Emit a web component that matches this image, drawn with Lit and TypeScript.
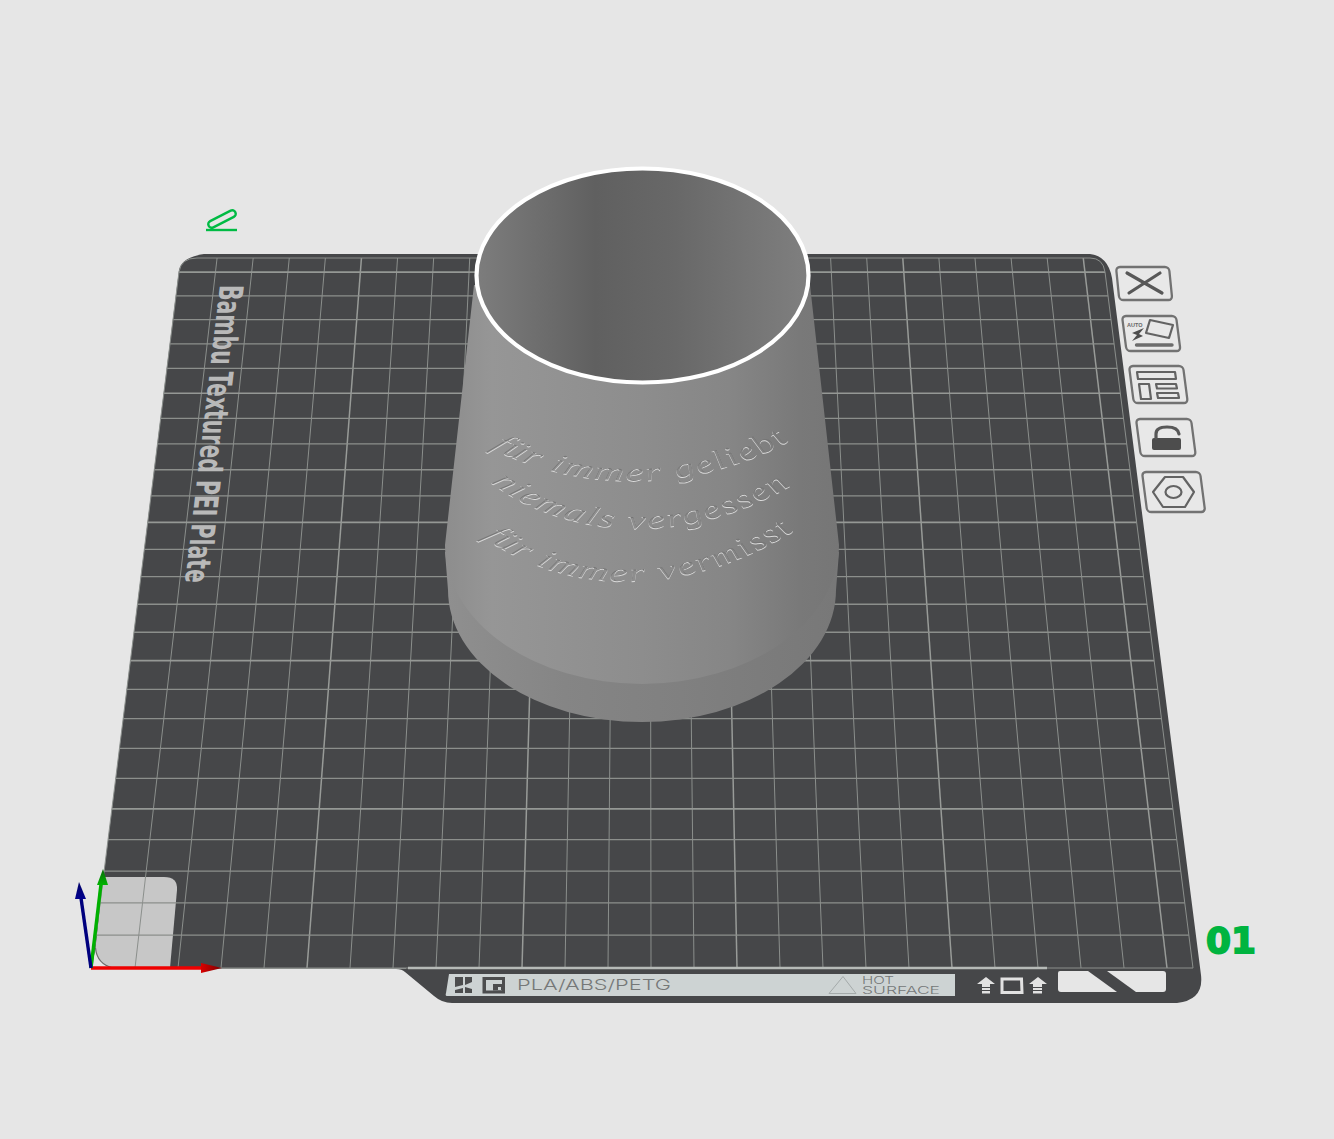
import { LitElement, html, svg, css } from 'lit';
import { customElement } from 'lit/decorators.js';

// bed perspective, fitted from the grid: v in mm from the front edge
const yAt = (v: number) => 968 - (3.303 * v) / (1 + 0.000747 * v);
const leftAt = (y: number) => 92 + ((968 - y) / 710) * 89;
const rightAt = (y: number) => 1193 - ((968 - y) / 710) * 88;

const BED = 'M92,968 L179,272 Q181,258 197,258 L1090,258 Q1103,258 1105,272 L1193,968 Z';
const PLATE =
  'M92,969 L179,270 Q182,257 204,254 L1090,254 Q1108,256 1112,278 L1201,975 Q1204,1000 1177,1003 L452,1003 Q442,1003 434,996 L405,972 Q402,969 396,969 Z';

const STRETCH = 1.55;
const scaled = (p: string) =>
  p.replace(/(\d+(?:\.\d+)?),(\d+(?:\.\d+)?)/g, (_, x, y) => `${(Number(x) / STRETCH).toFixed(2)},${y}`);

const CUP_LINES = [
  { id: 'l1', d: 'M490,448 C570,490 690,500 800,436', text: 'für immer geliebt' },
  { id: 'l2', d: 'M490,483 C560,535 680,555 800,481', text: 'niemals vergessen' },
  { id: 'l3', d: 'M482,537 C560,592 680,607 808,523', text: 'für immer vermisst' },
];

@customElement('app-root')
export class AppRoot extends LitElement {
  static styles = css`
    :host {
      display: block;
      width: 1334px;
      height: 1139px;
      background: #e6e6e6;
      overflow: hidden;
    }
    svg { display: block; }
    .plate { fill: #464749; }
    .tile { fill: #c7c7c7; }
    .tile-edge { fill: none; stroke: #6a6a6a; stroke-width: 1.2; }
    .corner { fill: #e6e6e6; }
    .grid { stroke: #8b8f8c; stroke-width: 1; fill: none; }
    .grid-major { stroke: #989b98; stroke-width: 1.5; fill: none; }
    .h-line { stroke: #8c8f8c; stroke-width: 1.3; fill: none; }
    .h-major { stroke: #959895; stroke-width: 1.7; fill: none; }
    .front-line { stroke: #b6bab7; stroke-width: 2.4; fill: none; }
    .plate-name {
      font-family: 'DejaVu Sans', sans-serif;
      font-weight: 700;
      font-size: 33px;
      fill: #b9b9b9;
    }
    .strip { fill: #cdd3d3; }
    .ink { fill: #4c4d4e; }
    .strip-light { fill: #cdd3d3; }
    .material {
      font-family: 'Inter', sans-serif;
      font-weight: 300;
      font-size: 15px;
      fill: #757878;
    }
    .hot {
      font-family: 'Inter', sans-serif;
      font-weight: 300;
      font-size: 10px;
      fill: #747777;
    }
    .warn { fill: none; stroke: #a4aaaa; stroke-width: 1; }
    .pale { fill: #e2e2e2; }
    .pale-line { fill: none; stroke: #e2e2e2; stroke-width: 3; }
    .tab { fill: #e6e6e6; }
    .rim { fill: url(#inner); stroke: #ffffff; stroke-width: 4.2; }
    .body { fill: url(#body); }
    .flange { fill: url(#flange); }
    .cup-text {
      font-family: 'Liberation Serif', serif;
      font-style: italic;
      font-size: 27px;
      letter-spacing: 1.5px;
      fill: #000;
    }
    .card { fill: #e8e8e8; stroke: #727272; stroke-width: 2.3; }
    .icon-line { fill: none; stroke: #636363; stroke-width: 2.2; stroke-linecap: round; stroke-linejoin: round; }
    .icon-bar { fill: none; stroke: #6c6c6c; stroke-width: 3.4; stroke-linecap: round; }
    .icon-thick { fill: none; stroke: #585858; stroke-width: 3.2; stroke-linecap: round; }
    .icon-fill { fill: #4d4d4d; }
    .auto {
      font-family: 'Liberation Sans', sans-serif;
      font-weight: 700;
      font-size: 5.5px;
      fill: #666;
    }
    .green-line { fill: none; stroke: #00bb44; stroke-width: 2.4; }
    .plate-no {
      font-family: 'DejaVu Sans', sans-serif;
      font-weight: 700;
      font-size: 36px;
      fill: #00b440;
      stroke: #00b440;
      stroke-width: 1.8;
    }
    .ax-r { fill: url(#cone-r); }
    .ax-g { fill: url(#cone-g); }
    .ax-b { fill: url(#cone-b); }
    .stem-r { stroke: #ee0000; stroke-width: 3.6; }
    .stem-g { stroke: #00b000; stroke-width: 3.4; }
    .stem-b { stroke: #00007e; stroke-width: 3.4; }
  `;

  gridLines() {
    const lines = [];
    for (let k = 1; k <= 25; k++) {
      const cls = k % 5 === 0 ? 'grid-major' : 'grid';
      lines.push(svg`<line class=${cls} x1=${92 + 43 * k} y1="968" x2=${181 + 36.09 * k} y2="258"></line>`);
    }
    for (let v = 10; v <= 250; v += 10) {
      const y = yAt(v);
      const cls = v % 50 === 0 ? 'h-major' : 'h-line';
      lines.push(svg`<line class=${cls} x1=${leftAt(y)} y1=${y} x2=${rightAt(y)} y2=${y}></line>`);
    }
    return lines;
  }

  card(x: number, y: number, w: number, h: number, k: number) {
    return svg`<rect class="card" width=${w} height=${h} rx="4" transform="matrix(1 0 ${k} 1 ${x} ${y})"></rect>`;
  }

  sideButtons() {
    return svg`
      ${this.card(1116, 267, 53, 33, 0.1)}
      <path class="icon-thick" d="M1127,273 L1162,293 M1160,273 L1129,293"></path>

      ${this.card(1122, 316, 54, 35, 0.13)}
      <text class="auto" x="1127" y="327">AUTO</text>
      <path class="icon-line" d="M1150,320 L1173,325 L1169,338 L1146,333 Z"></path>
      <path class="icon-fill" d="M1144,328 L1132,333 L1137,335 L1132,341 L1143,336 L1139,334 Z"></path>
      <path class="icon-bar" d="M1136.5,345 L1172,345"></path>

      ${this.card(1129, 366, 54, 37, 0.13)}
      <path class="icon-line" d="M1137,372 H1175 L1176,379 H1138 Z M1139,384 H1149 L1151,399 H1141 Z M1156,384 H1176 L1177,388.5 H1157 Z M1157,393 H1178 L1179,398 H1158 Z"></path>

      ${this.card(1136, 419, 55, 37, 0.13)}
      <rect class="icon-fill" x="1152" y="438" width="29" height="12" rx="2"></rect>
      <path class="icon-thick" d="M1156,438 V434 Q1156,427 1167,427 Q1178,427 1179,434"></path>

      ${this.card(1142, 472, 58, 40, 0.13)}
      <path class="icon-line" d="M1153,492 L1165,477 L1183,477 L1194,492 L1185,507 L1163,507 Z"></path>
      <ellipse class="icon-line" cx="1173.5" cy="492" rx="8" ry="6"></ellipse>
    `;
  }

  bottomStrip() {
    return svg`
      <path class="strip" d="M449,974 L955,974 L955,996 L447,996 Q445,996 446,993 Z"></path>
      <path class="ink" d="M455,977 H463 V985 L455,987 Z M465,977 H472 V982 L465,985 Z M455,990 L463,988 V993 H455 Z M465,987 L472,989 V993 H465 Z"></path>
      <rect class="ink" x="482.5" y="977" width="22.5" height="16.5"></rect>
      <rect class="strip-light" x="486" y="980" width="16" height="10.5"></rect>
      <rect class="ink" x="493" y="984" width="9" height="6.5"></rect>
      <rect class="strip-light" x="498" y="987" width="3" height="3"></rect>
      <text class="material" x="517" y="990" textLength="154" lengthAdjust="spacingAndGlyphs">PLA/ABS/PETG</text>
      <path class="warn" d="M829,993.5 L843,976.5 L856,993.5 Z"></path>
      <text class="hot" x="862" y="984" textLength="32" lengthAdjust="spacingAndGlyphs">HOT</text>
      <text class="hot" x="862" y="993.5" textLength="78" lengthAdjust="spacingAndGlyphs">SURFACE</text>

      <path class="pale" d="M986,977 L995,984 H990 V987 H982 V984 H977 Z M982,988 H990 V990 H982 Z M982,991 H990 V993.5 H982 Z"></path>
      <path class="pale-line" d="M1002,979 H1021.5 L1022,992.5 H1002 Z"></path>
      <path class="pale" d="M1038,977 L1047,984 H1042 V987 H1033 V984 H1029 Z M1033,988 H1042 V990 H1033 Z M1033,991 H1042 V993.5 H1033 Z"></path>

      <path class="tab" d="M1060,971 H1088 L1117,992 H1061 Q1058,992 1058,989 V973 Q1058,971 1060,971 Z"></path>
      <path class="tab" d="M1107,971 H1163 Q1166,971 1166,974 V989 Q1166,992 1163,992 H1136 Z"></path>
    `;
  }

  axes() {
    return svg`
      <line class="stem-r" x1="91" y1="968" x2="204" y2="968"></line>
      <path class="ax-r" d="M201,963 L222,968 L201,973 Z"></path>
      <line class="stem-g" x1="91" y1="968" x2="101" y2="884"></line>
      <path class="ax-g" d="M103,869 L108,885 L97,885 Z"></path>
      <line class="stem-b" x1="91" y1="968" x2="81" y2="898"></line>
      <path class="ax-b" d="M79,882 L86,899 L75,899 Z"></path>
    `;
  }

  cup() {
    return svg`
      <path class="flange" d="M445,552 L448,590 A194,132 0 0 0 836,590 L839,552 Z"></path>
      <path class="body" d="M474,285 L445,545 A197,139 0 0 0 839,545 L810,285 Z"></path>
      <g filter="url(#emboss)" transform="scale(${STRETCH} 1)">
        ${CUP_LINES.map(
          l => svg`<text class="cup-text"><textPath href="#${l.id}">${l.text}</textPath></text>`
        )}
      </g>
      <ellipse class="rim" cx="642.5" cy="275.5" rx="166" ry="107"></ellipse>
    `;
  }

  render() {
    return html`
      <svg width="1334" height="1139" viewBox="0 0 1334 1139">
        <defs>
          <linearGradient id="inner" gradientUnits="userSpaceOnUse" x1="476" y1="0" x2="808" y2="0">
            <stop offset="0" stop-color="#7d7d7d"></stop>
            <stop offset="0.36" stop-color="#606060"></stop>
            <stop offset="0.6" stop-color="#686868"></stop>
            <stop offset="1" stop-color="#7f7f7f"></stop>
          </linearGradient>
          <linearGradient id="body" gradientUnits="userSpaceOnUse" x1="445" y1="0" x2="839" y2="0">
            <stop offset="0" stop-color="#8d8d8d"></stop>
            <stop offset="0.12" stop-color="#969696"></stop>
            <stop offset="0.5" stop-color="#8d8d8d"></stop>
            <stop offset="0.72" stop-color="#868686"></stop>
            <stop offset="0.9" stop-color="#797979"></stop>
            <stop offset="1" stop-color="#767676"></stop>
          </linearGradient>
          <linearGradient id="flange" gradientUnits="userSpaceOnUse" x1="448" y1="0" x2="836" y2="0">
            <stop offset="0" stop-color="#8f8f8f"></stop>
            <stop offset="0.3" stop-color="#858585"></stop>
            <stop offset="0.6" stop-color="#808080"></stop>
            <stop offset="1" stop-color="#787878"></stop>
          </linearGradient>
          <linearGradient id="cone-r" x1="0" y1="0" x2="1" y2="0">
            <stop offset="0" stop-color="#d80000"></stop>
            <stop offset="1" stop-color="#7c0000"></stop>
          </linearGradient>
          <linearGradient id="cone-g" x1="0" y1="0" x2="0" y2="1">
            <stop offset="0" stop-color="#0a6a0a"></stop>
            <stop offset="1" stop-color="#00b400"></stop>
          </linearGradient>
          <linearGradient id="cone-b" x1="0" y1="0" x2="0" y2="1">
            <stop offset="0" stop-color="#000066"></stop>
            <stop offset="1" stop-color="#00008e"></stop>
          </linearGradient>
          <clipPath id="bed-clip"><path d=${BED}></path></clipPath>
          <filter id="emboss" x="-5%" y="-5%" width="110%" height="110%" color-interpolation-filters="sRGB">
            <feOffset in="SourceAlpha" dx="-0.3" dy="-0.6" result="up"></feOffset>
            <feComposite in="SourceAlpha" in2="up" operator="out" result="lightEdge"></feComposite>
            <feFlood flood-color="#dcdcdc" result="lightColor"></feFlood>
            <feComposite in="lightColor" in2="lightEdge" operator="in" result="light"></feComposite>
            <feOffset in="SourceAlpha" dx="0.3" dy="0.6" result="down"></feOffset>
            <feComposite in="SourceAlpha" in2="down" operator="out" result="darkEdge"></feComposite>
            <feFlood flood-color="#757575" result="darkColor"></feFlood>
            <feComposite in="darkColor" in2="darkEdge" operator="in" result="dark"></feComposite>
            <feMerge>
              <feMergeNode in="dark"></feMergeNode>
              <feMergeNode in="light"></feMergeNode>
            </feMerge>
          </filter>
          ${CUP_LINES.map(l => svg`<path id=${l.id} d=${scaled(l.d)}></path>`)}
        </defs>

        <path class="plate" d=${PLATE}></path>
        <path class="corner" d="M90,970 L97,944 Q99,962 114,969 Z"></path>
        <path class="tile" d="M103,877 L164,877 Q178,877 177,890 L170,968 L113,968 Q97,964 95.5,948 Z"></path>
        <path class="tile-edge" d="M95.5,948 Q97,964 113,968"></path>

        <g clip-path="url(#bed-clip)">${this.gridLines()}</g>
        <path class="grid" d=${BED}></path>
        <line class="front-line" x1="408" y1="968" x2="1047" y2="968"></line>
        <line class="grid" x1="215" y1="968.5" x2="406" y2="968.5"></line>

        <text class="plate-name" transform="matrix(-0.117 0.993 -1 0 220 285)" textLength="300" lengthAdjust="spacingAndGlyphs">Bambu Textured PEI Plate</text>

        ${this.bottomStrip()}
        ${this.cup()}
        ${this.sideButtons()}

        <rect class="green-line" x="-15" y="-3.5" width="30" height="7" rx="3.5" transform="translate(222 219) rotate(-27)"></rect>
        <line class="green-line" x1="206" y1="230" x2="237" y2="230"></line>

        <text class="plate-no" x="1206" y="953" textLength="50" lengthAdjust="spacingAndGlyphs">01</text>

        ${this.axes()}
      </svg>
    `;
  }
}
